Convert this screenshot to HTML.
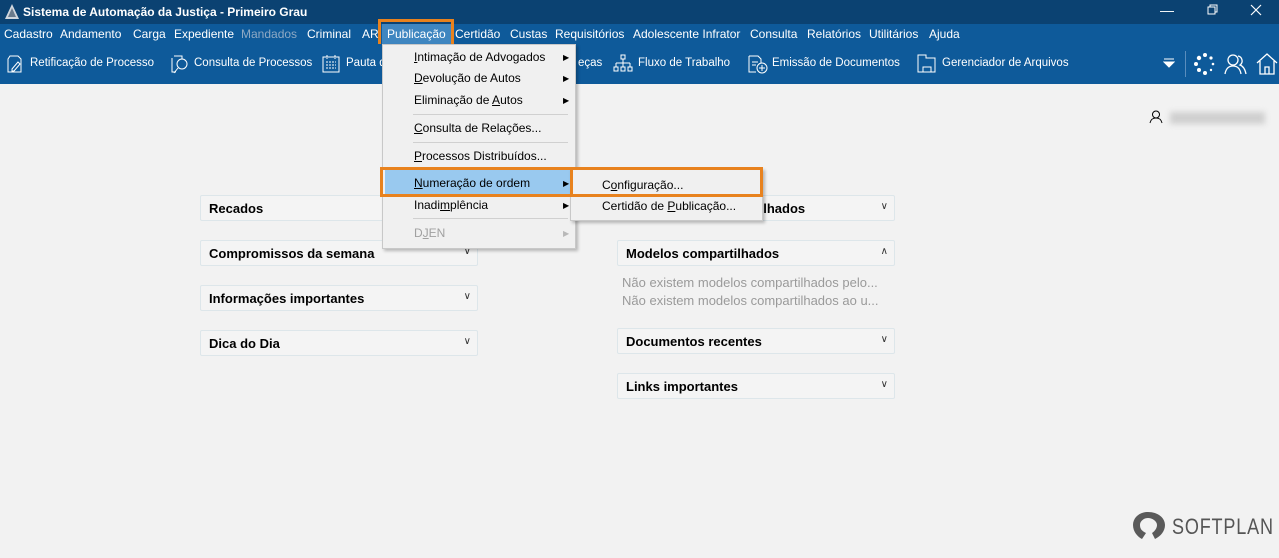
<!DOCTYPE html>
<html><head><meta charset="utf-8"><style>
*{margin:0;padding:0;box-sizing:border-box}
body{width:1279px;height:558px;overflow:hidden;background:#f2f2f2;font-family:"Liberation Sans",sans-serif;font-size:12px;position:relative;color:#000}
.abs{position:absolute}
#title{left:0;top:0;width:1279px;height:24px;background:#0b4272;color:#fff;font-weight:bold;font-size:12px}
#menu{left:0;top:24px;width:1279px;height:20px;background:#0e5a9a;color:#fff}
#menu span{position:absolute;top:3px;white-space:nowrap}
#tool{left:0;top:44px;width:1279px;height:40px;background:#0e5a9a;color:#fff;font-size:11.5px}
#tool span{position:absolute;top:13px;white-space:nowrap}
.panel{position:absolute;height:26px;background:#f4f4f4;border:1px solid #dde6ea;border-radius:2px;font-weight:bold;font-size:13px;padding:5px 0 0 8px}
.chev{position:absolute;right:6px;top:5px;font-weight:normal;font-size:10px;color:#333}
.dd{background:#f0f0f0;border:1px solid #c8c8c8;box-shadow:2px 2px 3px rgba(0,0,0,.25)}
.mi{position:absolute;left:31px;white-space:nowrap;font-size:12px}
.ar{position:absolute;left:180px;font-size:8px}
.sep{position:absolute;left:30px;width:155px;height:1px;background:#d0d0d0}
.ob{position:absolute;border:3px solid #e8821e}
u{text-decoration:underline}
</style></head><body>
<div id="title" class="abs">
 <svg class="abs" style="left:5px;top:4px" width="14" height="15"><polygon points="7,0 14,15 0,15" fill="#cfd6dd"/><polygon points="7,4 11,13 3,13" fill="#6a7b8c"/></svg>
 <span class="abs" style="left:23px;top:5px">Sistema de Automação da Justiça - Primeiro Grau</span>
 <span class="abs" style="left:1160px;top:2px;font-weight:normal;font-size:14px">&#8212;</span>
 <svg class="abs" style="left:1207px;top:4px" width="12" height="12"><rect x="1" y="3" width="7" height="7" fill="none" stroke="#fff"/><path d="M3 3V1h7v7H8" fill="none" stroke="#fff"/></svg>
 <svg class="abs" style="left:1250px;top:4px" width="12" height="12"><path d="M1 1L11 11M11 1L1 11" stroke="#fff" stroke-width="1.2"/></svg>
</div>
<div id="menu" class="abs">
 <span style="left:4px">Cadastro</span><span style="left:60px">Andamento</span><span style="left:133px">Carga</span><span style="left:174px">Expediente</span><span style="left:241px;color:#8ea9c4">Mandados</span><span style="left:307px">Criminal</span><span style="left:362px">AR</span>
 <span style="left:382px;top:0;width:69px;height:20px;background:#3f86c0"></span><span style="left:387px">Publicação</span>
 <span style="left:455px">Certidão</span><span style="left:510px">Custas</span><span style="left:555px">Requisitórios</span><span style="left:633px">Adolescente Infrator</span><span style="left:750px">Consulta</span><span style="left:807px">Relatórios</span><span style="left:869px">Utilitários</span><span style="left:929px">Ajuda</span>
</div>
<div class="ob" style="left:378px;top:19px;width:76px;height:29px"></div>
<div id="tool" class="abs">
 <svg class="abs" style="left:6px;top:10px" width="18" height="20" fill="none" stroke="#fff"><path d="M4 2h8l3 3v13H2V5z"/><path d="M6 15l6-7 2 2-6 7H6z"/></svg><span style="left:30px">Retificação de Processo</span>
 <svg class="abs" style="left:169px;top:10px" width="22" height="20" fill="none" stroke="#fff"><path d="M5 2h8v3M3 4v14h4"/><circle cx="13" cy="10" r="5"/><path d="M9 14l-4 5"/></svg><span style="left:194px">Consulta de Processos</span>
 <svg class="abs" style="left:322px;top:10px" width="18" height="19" fill="none" stroke="#fff"><rect x="1" y="3" width="16" height="15"/><path d="M5 1v4M13 1v4M4 8h10M4 11h10M4 14h10" stroke-dasharray="2 1"/></svg><span style="left:346px">Pauta d</span>
 <span style="left:578px">eças</span>
 <svg class="abs" style="left:613px;top:10px" width="20" height="18" fill="none" stroke="#fff"><rect x="8" y="1" width="4" height="4"/><path d="M10 5v4M3 9h14M3 9v4M10 9v4M17 9v4"/><rect x="1" y="13" width="4" height="4"/><rect x="8" y="13" width="4" height="4"/><rect x="15" y="13" width="4" height="4"/></svg><span style="left:638px">Fluxo de Trabalho</span>
 <svg class="abs" style="left:747px;top:10px" width="22" height="21" fill="none" stroke="#fff"><path d="M2 2h9l3 3v4M2 2v16h7M5 8h6M5 11h4"/><circle cx="15" cy="14" r="5"/><path d="M15 11v6M12 14h6"/></svg><span style="left:772px">Emissão de Documentos</span>
 <svg class="abs" style="left:917px;top:10px" width="20" height="20" fill="none" stroke="#fff"><path d="M1 1h8v3h9v14H1z"/><path d="M6 18v-5h8v5"/></svg><span style="left:942px">Gerenciador de Arquivos</span>
 <svg class="abs" style="left:1163px;top:14px" width="12" height="10"><path d="M1 1h10M1 4l5 5 5-5z" stroke="#fff" fill="#fff"/></svg>
 <div class="abs" style="left:1185px;top:7px;width:1px;height:26px;background:#5a8dbd"></div>
 <svg class="abs" style="left:1193px;top:8px" width="24" height="24" fill="#fff"><circle cx="12" cy="3" r="2"/><circle cx="18" cy="6" r="1.6"/><circle cx="20" cy="12" r="1.3"/><circle cx="18" cy="18" r="1.2"/><circle cx="12" cy="21" r="2"/><circle cx="6" cy="18" r="2"/><circle cx="3" cy="12" r="2"/><circle cx="6" cy="6" r="2.2"/></svg>
 <svg class="abs" style="left:1224px;top:8px" width="24" height="24" fill="none" stroke="#fff" stroke-width="1.3"><circle cx="9" cy="8" r="5"/><path d="M1 22c1-6 4-8 8-8s7 2 8 8M14 4a5 5 0 0 1 2 9c3 1 5 4 6 9"/></svg>
 <svg class="abs" style="left:1255px;top:8px" width="24" height="24" fill="none" stroke="#fff" stroke-width="1.3"><path d="M2 11L12 2l10 9M5 9v13h14V9M10 22v-7h4v7"/></svg>
</div>
<svg class="abs" style="left:1149px;top:110px" width="14" height="14" fill="none" stroke="#000"><circle cx="7" cy="4.5" r="3.5"/><path d="M1 13c1-4 3-5 6-5s5 1 6 5"/></svg>
<div class="abs" style="left:1170px;top:112px;width:95px;height:12px;background:#cfcfcf;filter:blur(3px)"></div>

<div class="panel" style="left:200px;top:195px;width:278px">Recados<span class="chev">&#8744;</span></div>
<div class="panel" style="left:200px;top:240px;width:278px">Compromissos da semana<span class="chev">&#8744;</span></div>
<div class="panel" style="left:200px;top:285px;width:278px">Informações importantes<span class="chev">&#8744;</span></div>
<div class="panel" style="left:200px;top:330px;width:278px">Dica do Dia<span class="chev">&#8744;</span></div>
<div class="panel" style="left:617px;top:195px;width:278px">Documentos compartilhados<span class="chev">&#8744;</span></div>
<div class="panel" style="left:617px;top:240px;width:278px">Modelos compartilhados<span class="chev">&#8743;</span></div>
<div class="abs" style="left:622px;top:275px;color:#9a9a9a;font-size:13px">Não existem modelos compartilhados pelo...</div>
<div class="abs" style="left:622px;top:293px;color:#9a9a9a;font-size:13px">Não existem modelos compartilhados ao u...</div>
<div class="panel" style="left:617px;top:328px;width:278px">Documentos recentes<span class="chev">&#8744;</span></div>
<div class="panel" style="left:617px;top:373px;width:278px">Links importantes<span class="chev">&#8744;</span></div>

<div class="abs dd" style="left:382px;top:44px;width:194px;height:205px">
 <span class="mi" style="top:5px"><u>I</u>ntimação de Advogados</span><span class="ar" style="top:8px">&#9654;</span>
 <span class="mi" style="top:26px"><u>D</u>evolução de Autos</span><span class="ar" style="top:29px">&#9654;</span>
 <span class="mi" style="top:48px">Eliminação de <u>A</u>utos</span><span class="ar" style="top:51px">&#9654;</span>
 <div class="sep" style="top:69px"></div>
 <span class="mi" style="top:76px"><u>C</u>onsulta de Relações...</span>
 <div class="sep" style="top:97px"></div>
 <span class="mi" style="top:104px"><u>P</u>rocessos Distribuídos...</span>
 <div class="abs" style="left:2px;top:125px;width:188px;height:26px;background:#99c9ef"></div>
 <span class="mi" style="top:131px"><u>N</u>umeração de ordem</span><span class="ar" style="top:134px">&#9654;</span>
 <span class="mi" style="top:153px">Inadi<u>m</u>plência</span><span class="ar" style="top:156px">&#9654;</span>
 <div class="sep" style="top:173px"></div>
 <span class="mi" style="top:181px;color:#a0a0a0">D<u>J</u>EN</span><span class="ar" style="top:184px;color:#b8b8b8">&#9654;</span>
</div>
<div class="abs dd" style="left:570px;top:168px;width:193px;height:53px">
 <span class="mi" style="top:9px">C<u>o</u>nfiguração...</span>
 <span class="mi" style="top:30px">Certidão de <u>P</u>ublicação...</span>
</div>
<div class="ob" style="left:380px;top:167px;width:193px;height:30px"></div>
<div class="ob" style="left:570px;top:167px;width:193px;height:30px"></div>

<svg class="abs" style="left:1131px;top:510px" width="35" height="32"><path d="M17 2C8 2 2 8 2 15c0 7 5 12 9 14l4-6c-4-2-6-4-6-8 0-4 4-7 8-7s9 3 9 7c0 3-2 6-5 8l3 6c6-3 10-8 10-14C34 8 27 2 17 2z" fill="#5a5a5a"/></svg>
<div class="abs" style="left:1172px;top:514px;font-size:22px;color:#555;letter-spacing:1px;transform:scaleX(.82);transform-origin:left;white-space:nowrap">SOFTPLAN</div>
</body></html>
